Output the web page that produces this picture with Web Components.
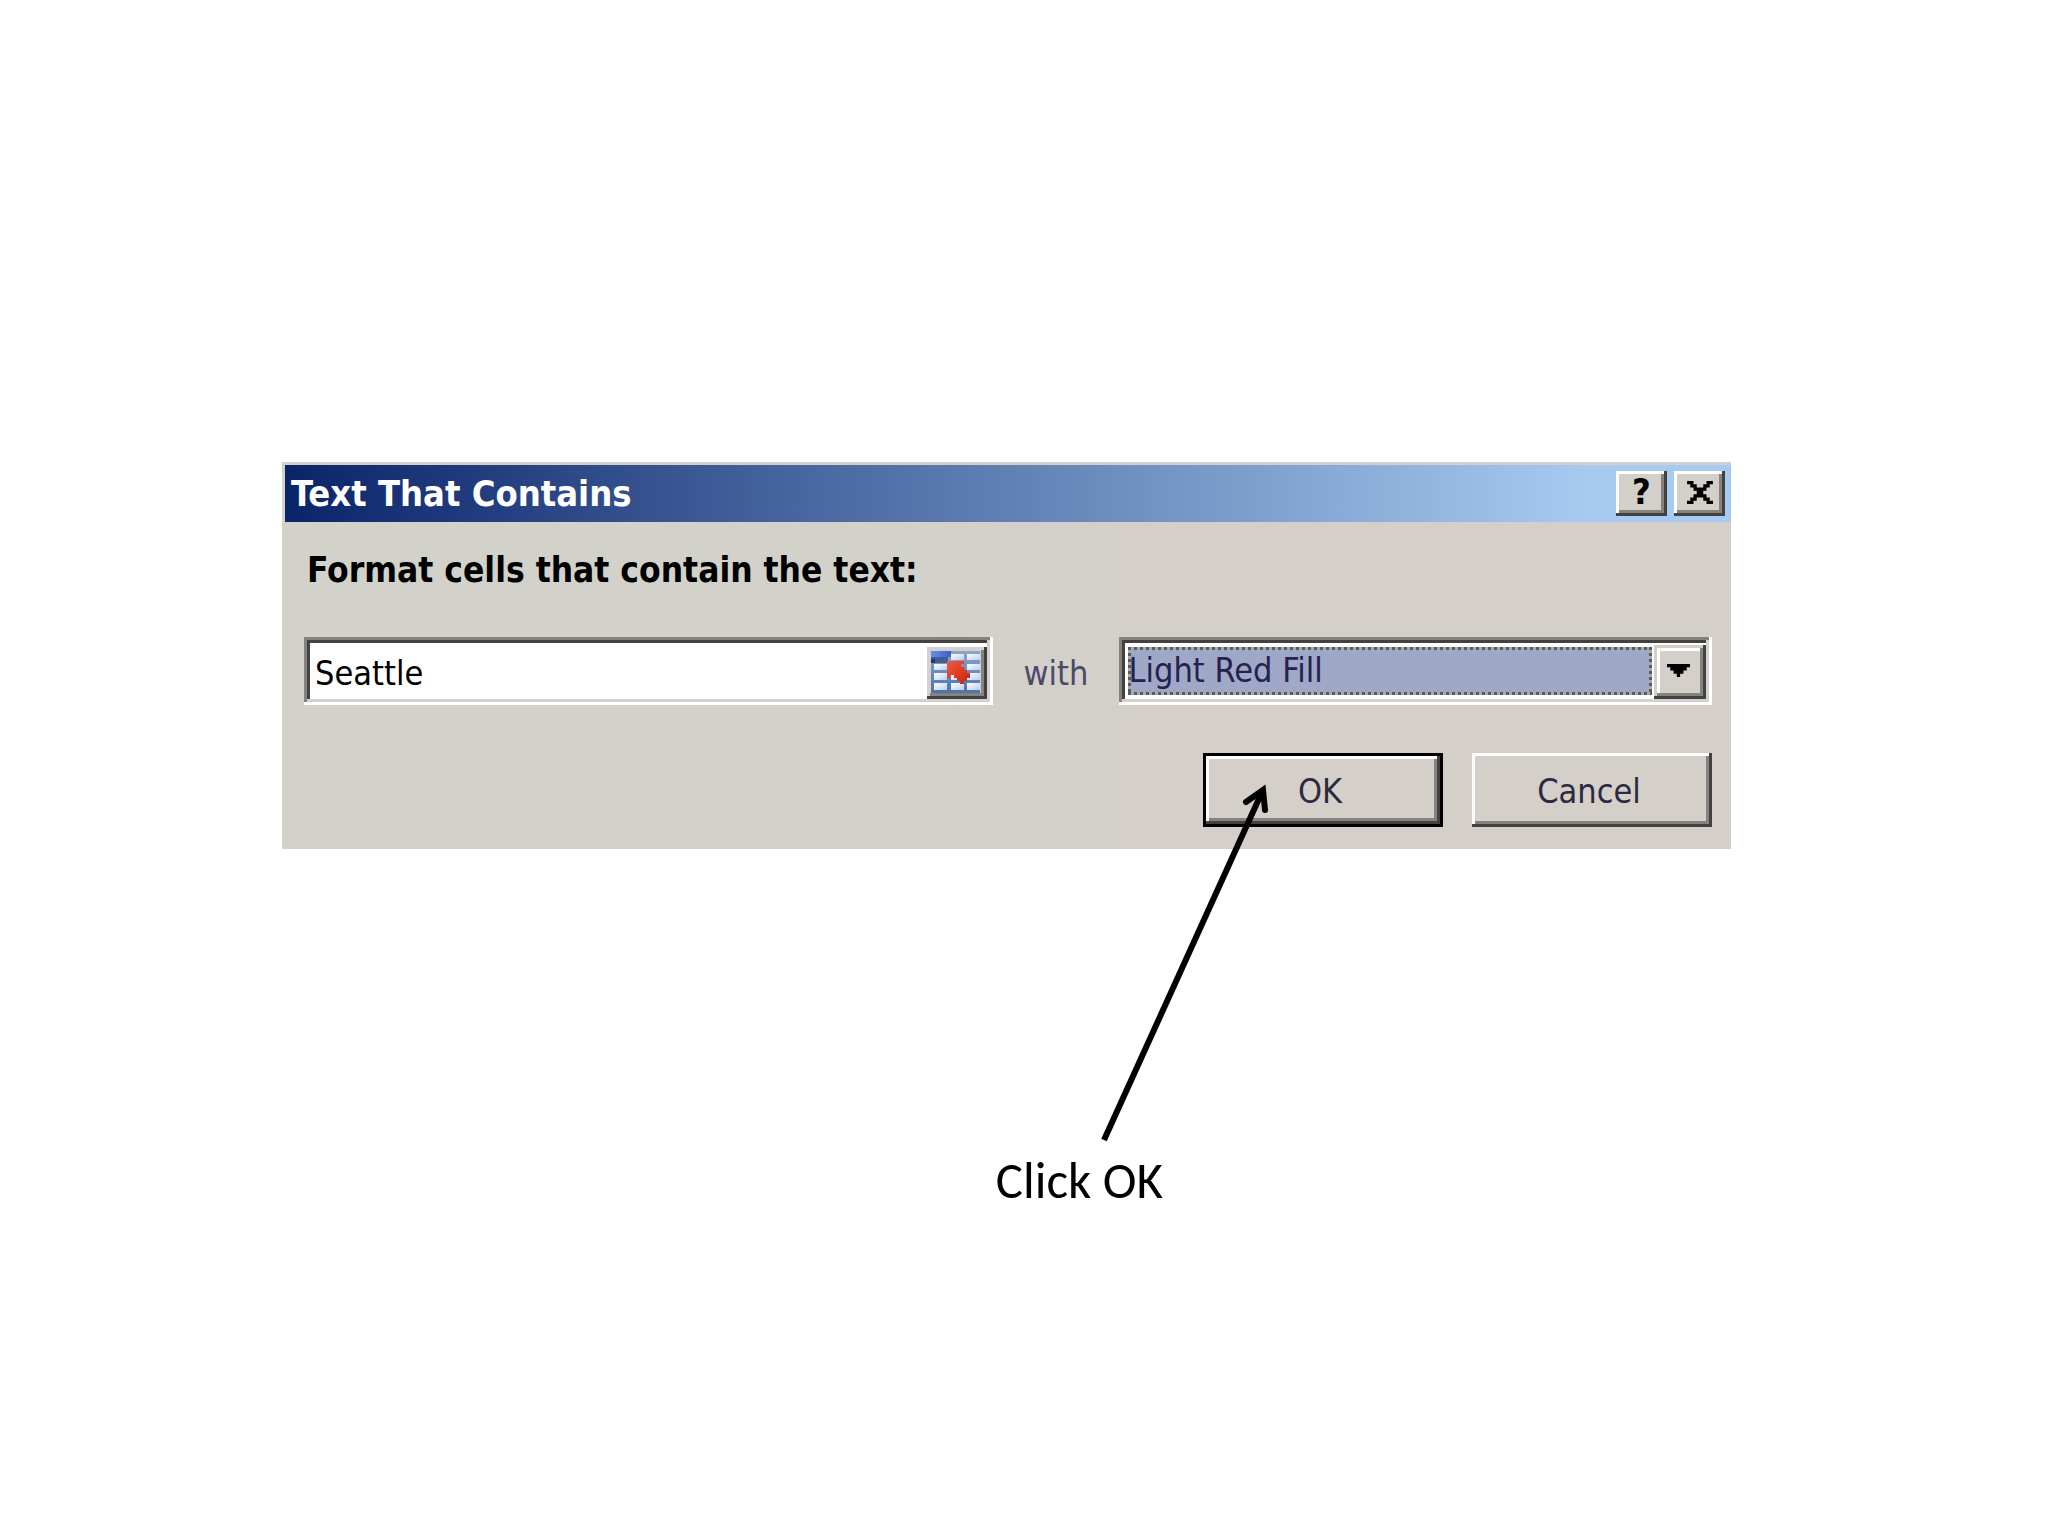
<!DOCTYPE html>
<html lang="en">
<head>
<meta charset="utf-8">
<title>Text That Contains</title>
<style>
  body { margin: 0; background: #fff; }
</style>
</head>
<body>
<guide-slide>
  <classic-dialog heading="Text That Contains">
    <text-rule-form></text-rule-form>
  </classic-dialog>
  <step-callout slot="note">Click OK</step-callout>
</guide-slide>

<script>
const define = (name, html, setup) => {
  const template = document.createElement('template');
  template.innerHTML = html;
  customElements.define(name, class extends HTMLElement {
    constructor() {
      super();
      this.attachShadow({ mode: 'open' }).append(template.content.cloneNode(true));
    }
    connectedCallback() { if (setup) setup(this, this.shadowRoot); }
  });
};

define('guide-slide', `
<style>
  :host {
    display: block; box-sizing: border-box; min-height: 100vh;
    padding: 462px 317px 0 282px; background: #fff;
    --face: #d4d0c9; --dark: #444240; --shade: #84837f; --pale: #d4d2ce;
    --raised: inset -3px -3px var(--dark), inset 3px 3px #fff, inset -6px -6px var(--shade);
    --sunken: inset -3px -3px #fff, inset 3px 3px var(--shade), inset -6px -6px var(--pale), inset 6px 6px var(--dark);
    font-family: "DejaVu Sans Condensed", Tahoma, sans-serif;
  }
  main { display: flex; flex-direction: column; }
</style>
<main><slot></slot><slot name="note"></slot></main>`);

/* Window frame with a gradient caption bar. */
define('classic-dialog', `
<style>
  :host { display: block; background: linear-gradient(90deg, #d2d2ca 0 40%, #d4cfc9 60%); padding: 3px 0 0 3px; }
  header {
    display: flex; align-items: center; gap: 7px; height: 57px; box-sizing: border-box;
    padding: 0 6px; background: linear-gradient(90deg, #0a246a, #a6caf0 90%);
  }
  h1 { flex: 1; margin: 0; font-size: 36px; line-height: 44px; font-weight: bold; color: #fff; }
  section { margin-left: -3px; }
</style>
<header>
  <h1></h1>
  <caption-button label="Help" glyph="?"></caption-button>
  <caption-button label="Close"></caption-button>
</header>
<section><slot></slot></section>`,
(host, root) => { root.querySelector('h1').textContent = host.getAttribute('heading'); });

define('caption-button', `
<style>
  :host { display: block; }
  button {
    display: flex; align-items: center; justify-content: center;
    width: 51px; height: 45px; padding: 0 0 3px; border: 0;
    background: var(--face); box-shadow: var(--raised); color: #000;
    font: bold 36px/36px "DejaVu Sans Condensed", sans-serif;
  }
  svg { display: block; }
</style>
<button type="button"></button>`,
(host, root) => {
  const button = root.querySelector('button');
  button.setAttribute('aria-label', host.getAttribute('label'));
  if (host.hasAttribute('glyph')) button.textContent = host.getAttribute('glyph');
  else button.innerHTML = `<svg width="26" height="23" viewBox="0 0 8 7" preserveAspectRatio="none" aria-hidden="true">
    <path d="M0 0h2v1h1v1h2v-1h1v-1h2v1h-1v1h-1v1h-1v1h1v1h1v1h1v1h-2v-1h-1v-1h-2v1h-1v1h-2v-1h1v-1h1v-1h1v-1h-1v-1h-1v-1h-1z"/></svg>`;
});

define('push-button', `
<style>
  :host { display: block; width: 240px; }
  button {
    width: 100%; height: 74px; padding: 2px 6px 0 0; border: 0; color: #2c2a40;
    background: var(--face); box-shadow: var(--raised);
    font: 34px/44px "DejaVu Sans Condensed", sans-serif;
  }
  :host([default]) button { border: 3px solid #000; }
</style>
<button type="button"><slot></slot></button>`);

/* Sunken well that holds an edit box or a list together with its button. */
define('sunken-well', `
<style>
  :host { display: flex; align-items: flex-end; box-sizing: border-box; height: 68px; padding: 6px; background: #fff; box-shadow: var(--sunken); }
</style>
<slot></slot>`);

define('text-rule-form', `
<style>
  :host { display: block; padding: 26px 19px 22px 22px; }
  form { display: block; margin: 0; }
  label { display: block; color: #000; font-size: 34px; line-height: 44px; }
  .lead { font-size: 35px; font-weight: bold; padding-left: 3px; }
  .fields { display: grid; grid-template-columns: 688fr auto 592fr; column-gap: 31px; align-items: center; margin: 45px 0 48px; }
  .with { color: #4c4a6a; padding-top: 3px; }
  .actions { display: flex; justify-content: flex-end; gap: 29px; }
  input, select { flex: 1; min-width: 0; border: 0; outline: 0; border-radius: 0; color: #000; font: 34px/44px "DejaVu Sans Condensed", sans-serif; }
  input { height: 56px; box-sizing: border-box; padding: 3px 5px 0; background: transparent; }
  select {
    appearance: none; box-sizing: border-box; height: 48px; margin: 4px 2px 4px 3px; padding: 0 0 3px; color: #25224f;
    background:
      repeating-linear-gradient(90deg, #5b5f45 0 3px, transparent 3px 6px) 0 0 / 100% 3px no-repeat,
      repeating-linear-gradient(90deg, #5b5f45 0 3px, transparent 3px 6px) 0 100% / 100% 3px no-repeat,
      repeating-linear-gradient(#5b5f45 0 3px, transparent 3px 6px) 0 0 / 3px 100% no-repeat,
      repeating-linear-gradient(#5b5f45 0 3px, transparent 3px 6px) 100% 0 / 3px 100% no-repeat,
      #a0a8c7;
  }
  .side { display: flex; align-items: center; justify-content: center; flex: none; padding: 0 3px 3px 0; border: 0; background: var(--face); }
  .pick { width: 60px; height: 52px; padding: 0 3px 3px 0; box-shadow: inset -3px -3px var(--dark), inset 3px 3px var(--pale), inset -6px -6px var(--shade); }
  .drop { width: 52px; height: 54px; box-shadow: inset -3px -3px var(--dark), inset 3px 3px var(--face), inset -6px -6px var(--shade), inset 6px 6px #fff; }
  svg { display: block; }
</style>
<form>
  <label class="lead" for="text">Format cells that contain the text:</label>
  <div class="fields">
    <sunken-well>
      <input id="text" type="text" value="Seattle">
      <button class="side pick" type="button" aria-label="Pick a cell">
        <svg width="49" height="42" viewBox="0 0 49 42" aria-hidden="true">
          <defs>
            <linearGradient id="grid" x2="0" y2="1"><stop stop-color="#8aa6cf"/><stop offset="1" stop-color="#4f72ad"/></linearGradient>
            <linearGradient id="cell" x2="1" y2="1"><stop stop-color="#fff"/><stop offset="1" stop-color="#b9cdf0"/></linearGradient>
            <linearGradient id="head" x2="1"><stop stop-color="#6d8fe8"/><stop offset="1" stop-color="#3c5fcb"/></linearGradient>
            <linearGradient id="red" x2="1" y2="1"><stop stop-color="#e2604a"/><stop offset="0.5" stop-color="#e83a20"/><stop offset="1" stop-color="#b02a1c"/></linearGradient>
          </defs>
          <path fill="url(#grid)" d="M0 0h49v42H0z"/>
          <path fill="url(#head)" d="M0 0h20v6H0z"/>
          <path fill="#3f5f96" d="M0 6h17v6H0z"/>
          <path fill="#243c63" d="M0 8h4v4H0z"/>
          <g fill="url(#cell)">
            <path d="M20 3h13v6H20z"/><path d="M36 3h13v6H36z"/>
            <path d="M3 13h13v6H3z"/><path d="M36 13h13v6H36z"/>
            <path d="M3 22h13v7H3z"/><path d="M20 22h13v7H20z"/><path d="M36 22h13v7H36z"/>
            <path d="M3 32h13v7H3z"/><path d="M20 32h13v7H20z"/><path d="M36 32h13v7H36z"/>
          </g>
          <path fill="url(#red)" d="M16 10h17v3h-3v3h3v3h3v3h3v5h-3v3h-3v3h-4v-3h-3v-3h-3v-3h-4v3h-3z"/>
        </svg>
      </button>
    </sunken-well>
    <label class="with" for="format">with</label>
    <sunken-well>
      <select id="format"><option>Light Red Fill</option></select>
      <button class="side drop" type="button" aria-label="Open the list">
        <svg width="23" height="13" viewBox="0 0 7 4" preserveAspectRatio="none" aria-hidden="true"><path d="M0 0h7v1h-1v1h-1v1h-1v1h-1v-1h-1v-1h-1v-1h-1z"/></svg>
      </button>
    </sunken-well>
  </div>
  <div class="actions">
    <push-button default>OK</push-button>
    <push-button>Cancel</push-button>
  </div>
</form>`);

/* Caption below the dialog; its arrow reaches up over the OK button. */
define('step-callout', `
<style>
  :host { display: flex; justify-content: flex-end; padding: 301px 568px 0 0; }
  p { position: relative; margin: 0; color: #000; font: 51px/62px Carlito, Calibri, Lato, sans-serif; }
  svg { position: absolute; left: 103px; bottom: 100%; pointer-events: none; }
</style>
<p><slot></slot>
  <svg width="176" height="370" viewBox="0 0 176 370" fill="none" stroke="#000" stroke-width="6" aria-hidden="true">
    <path d="M5 360 163 12"/>
    <path stroke-linecap="round" d="M147 22 164 10 166 30"/>
  </svg>
</p>`);
</script>
</body>
</html>
